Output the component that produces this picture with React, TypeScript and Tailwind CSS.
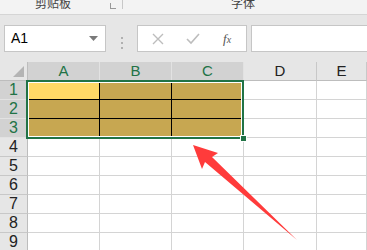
import React from "react";

const cols = ["A", "B", "C", "D", "E"];
const rows = [1, 2, 3, 4, 5, 6, 7, 8, 9];

const App = () => {
  return (
    <div className="relative w-[367px] h-[250px] overflow-hidden bg-white font-['Liberation_Sans','Noto_Sans_CJK_SC',sans-serif]">
      {/* ribbon strip, cut off at top */}
      <div className="h-[15px] bg-[#f3f3f3] border-b border-[#d5d5d5] relative overflow-hidden">
        <div className="absolute left-[35px] top-[-2px] text-[12px] leading-[12px] text-[#444]">剪贴板</div>
        <div className="absolute left-[110px] top-[3px] w-[6px] h-[6px] border-l border-b border-[#999]" />
        <div className="absolute left-[122px] top-0 w-px h-[9px] bg-[#c8c8c8]" />
        <div className="absolute left-[231px] top-[-2px] text-[12px] leading-[12px] text-[#444]">字体</div>
      </div>

      {/* formula bar */}
      <div className="h-[47px] bg-[#e6e6e6] flex pt-[10px] pl-[4px]">
        <div className="w-[102px] h-[27px] bg-white border border-[#c6c6c6] flex items-center justify-between px-[6px]">
          <span className="text-[14px] text-black">A1</span>
          <svg width="9" height="5" viewBox="0 0 9 5" className="mr-[1px]">
            <path d="M0 0h9L4.5 5z" fill="#7a7a7a" />
          </svg>
        </div>
        <div className="w-[31px] flex flex-col items-center justify-center gap-[3px] pb-[1px]">
          <span className="w-[2px] h-[2px] bg-[#b0b0b0]" />
          <span className="w-[2px] h-[2px] bg-[#b0b0b0]" />
          <span className="w-[2px] h-[2px] bg-[#b0b0b0]" />
        </div>
        <div className="w-[110px] h-[27px] bg-white border border-[#c6c6c6] flex items-center">
          <svg width="12" height="12" viewBox="0 0 12 12" className="ml-[14px]">
            <path d="M1 1l10 10M11 1L1 11" stroke="#bdbdbd" strokeWidth="1.4" />
          </svg>
          <svg width="14" height="12" viewBox="0 0 14 12" className="ml-[22px]">
            <path d="M1 6l4 4 8-9" stroke="#bdbdbd" strokeWidth="1.6" fill="none" />
          </svg>
          <span className="ml-[23px] text-[13px] italic text-[#555] font-['Liberation_Serif',serif]">
            f<span className="text-[10px]">x</span>
          </span>
        </div>
        <div className="ml-[4px] flex-1 h-[27px] bg-white border border-[#c6c6c6] border-r-0" />
      </div>

      {/* sheet */}
      <div className="relative">
        <div className="grid grid-cols-[28px_72px_72px_72px_73px_1fr]">
          {/* header row */}
          <div className="h-[19px] bg-[#e6e6e6] border-r border-b border-[#bdbdbd] relative">
            <svg width="11" height="11" viewBox="0 0 11 11" className="absolute right-[3px] bottom-[3px]">
              <path d="M11 0v11H0z" fill="#b4b4b4" />
            </svg>
          </div>
          {cols.map((c, i) => {
            const sel = i < 3;
            return (
              <div
                key={c}
                className={
                  sel
                    ? "h-[19px] bg-[#d2d2d2] border-r border-b border-r-[#e2e2e2] border-b-[#bdbdbd] flex items-center justify-center text-[15px] text-[#217346]"
                    : "h-[19px] bg-[#e6e6e6] border-r border-b border-r-[#c8c8c8] border-b-[#bdbdbd] flex items-center justify-center text-[15px] text-[#222]"
                }
              >
                {c}
              </div>
            );
          })}

          {rows.map((r) => {
            const sel = r <= 3;
            return (
              <React.Fragment key={r}>
                <div
                  className={
                    sel
                      ? "h-[19px] bg-[#d2d2d2] border-r border-b border-r-[#bdbdbd] border-b-[#e2e2e2] flex items-center justify-center text-[16px] text-[#217346]"
                      : "h-[19px] bg-[#e6e6e6] border-r border-b border-r-[#bdbdbd] border-b-[#c8c8c8] flex items-center justify-center text-[16px] text-[#222]"
                  }
                >
                  {r}
                </div>
                {cols.map((c, i) => {
                  const inRange = sel && i < 3;
                  let cls = "h-[19px] border-r border-b border-[#d4d4d4]";
                  if (inRange) {
                    cls =
                      "h-[19px] border-r border-b border-black " +
                      (r === 1 && i === 0 ? "bg-[#ffd966]" : "bg-[#c7a751]");
                  }
                  return <div key={c} className={cls} />;
                })}
              </React.Fragment>
            );
          })}
        </div>

        {/* selection outline */}
        <div className="absolute left-[26px] top-[18px] w-[218px] h-[59px] border-2 border-[#217346] shadow-[inset_0_0_0_1px_#ffffff]" />
        <div className="absolute left-[240px] top-[73px] w-[7px] h-[7px] bg-[#217346] border border-white" />
      </div>

      {/* red arrow */}
      <svg className="absolute left-0 top-0" width="367" height="250" viewBox="0 0 367 250">
        <polygon
          points="193,145 218,153 212,157 297,240 205,162 202,169"
          fill="#ff3b3b"
        />
      </svg>
    </div>
  );
};

export default App;
